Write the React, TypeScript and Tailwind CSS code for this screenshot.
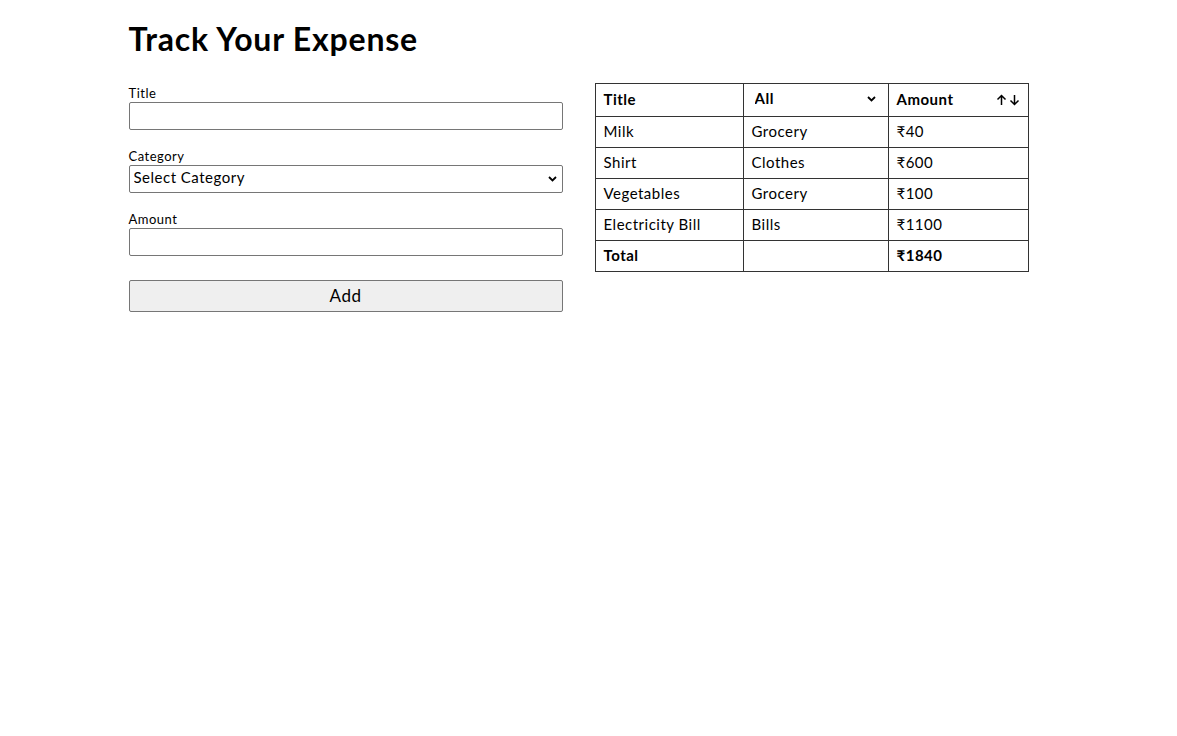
import { useState } from "react";

type Expense = {
  id: number;
  title: string;
  category: string;
  amount: number;
};

const initialExpenses: Expense[] = [
  { id: 1, title: "Milk", category: "Grocery", amount: 40 },
  { id: 2, title: "Shirt", category: "Clothes", amount: 600 },
  { id: 3, title: "Vegetables", category: "Grocery", amount: 100 },
  { id: 4, title: "Electricity Bill", category: "Bills", amount: 1100 },
];

const inputClass =
  "block w-full h-[28px] border border-[#767676] rounded-[2px] px-1 text-[15px] bg-white outline-none";

export default function App() {
  const [expenses] = useState<Expense[]>(initialExpenses);
  const [filter, setFilter] = useState("");

  const rows = filter ? expenses.filter((e) => e.category === filter) : expenses;
  const total = rows.reduce((sum, e) => sum + e.amount, 0);

  return (
    <main
      className="mx-auto max-w-[920px] pr-5 text-black tracking-[0.5px]"
      style={{ fontFamily: "Lato, 'Noto Sans', 'DejaVu Sans', sans-serif" }}
    >
      <h1 className="pt-[18px] text-[32px] font-bold leading-[42px] tracking-[0.8px]">
        Track Your Expense
      </h1>

      <div className="mt-[23px] flex gap-8">
        {/* Form */}
        <form className="w-[434px] pt-[2px]" onSubmit={(e) => e.preventDefault()}>
          <label className="block text-[13px] leading-[17px]">Title</label>
          <input type="text" className={inputClass} />

          <label className="mt-[18px] block text-[13px] leading-[17px]">Category</label>
          <div className="relative">
            <select
              className="block w-full h-[28px] appearance-none border border-[#767676] rounded-[2px] pl-1 pb-[3px] text-[15px] bg-white outline-none"
              defaultValue=""
            >
              <option value="">Select Category</option>
              <option value="Grocery">Grocery</option>
              <option value="Clothes">Clothes</option>
              <option value="Bills">Bills</option>
              <option value="Education">Education</option>
              <option value="Medicine">Medicine</option>
            </select>
            <svg
              className="pointer-events-none absolute right-[6px] top-[11px]"
              width="9"
              height="6"
              viewBox="0 0 9 6"
            >
              <path d="M1 1l3.5 3.5L8 1" fill="none" stroke="black" strokeWidth="1.8" />
            </svg>
          </div>

          <label className="mt-[18px] block text-[13px] leading-[17px]">Amount</label>
          <input type="number" className={inputClass} />

          <button
            type="submit"
            className="mt-6 block w-full h-[32px] border border-[#767676] rounded-[2px] bg-[#efefef] text-[17px]"
          >
            Add
          </button>
        </form>

        {/* Table */}
        <table className="w-[434px] h-fit border-collapse border border-[#333] text-[15px]">
          <thead>
            <tr className="h-[33px]">
              <th className="w-[148px] border border-[#333] px-2 pb-[1px] text-left font-bold">Title</th>
              <th className="w-[145px] border border-[#333] px-2 text-left font-bold">
                <div className="relative">
                  <select
                    value={filter}
                    onChange={(e) => setFilter(e.target.value)}
                    className="w-full appearance-none bg-transparent pl-[3px] pb-[3px] font-bold outline-none"
                  >
                    <option value="">All</option>
                    <option value="Grocery">Grocery</option>
                    <option value="Clothes">Clothes</option>
                    <option value="Bills">Bills</option>
                  </select>
                  <svg
                    className="pointer-events-none absolute right-[4px] top-[9px]"
                    width="9"
                    height="6"
                    viewBox="0 0 9 6"
                  >
                    <path d="M1 1l3.5 3.5L8 1" fill="none" stroke="black" strokeWidth="1.8" />
                  </svg>
                </div>
              </th>
              <th className="border border-[#333] px-2 pb-[1px] text-left font-bold">
                <div className="flex items-center justify-between">
                  <span>Amount</span>
                  <span className="flex items-center gap-[2px]">
                    <svg width="11" height="12" viewBox="0 0 11 12">
                      <path d="M5.5 11V1.5M1.5 5.5l4-4 4 4" fill="none" stroke="black" strokeWidth="1.5" />
                    </svg>
                    <svg width="11" height="12" viewBox="0 0 11 12">
                      <path d="M5.5 1v9.5M1.5 6.5l4 4 4-4" fill="none" stroke="black" strokeWidth="1.5" />
                    </svg>
                  </span>
                </div>
              </th>
            </tr>
          </thead>
          <tbody>
            {rows.map((e) => (
              <tr key={e.id} className="h-[31px]">
                <td className="border border-[#333] px-2 pb-[1px]">{e.title}</td>
                <td className="border border-[#333] px-2 pb-[1px]">{e.category}</td>
                <td className="border border-[#333] px-2 pb-[1px]">₹{e.amount}</td>
              </tr>
            ))}
            <tr className="h-[31px] font-bold">
              <td className="border border-[#333] px-2 pb-[1px]">Total</td>
              <td className="border border-[#333] px-2 pb-[1px]"></td>
              <td className="border border-[#333] px-2 pb-[1px]">₹{total}</td>
            </tr>
          </tbody>
        </table>
      </div>
    </main>
  );
}
